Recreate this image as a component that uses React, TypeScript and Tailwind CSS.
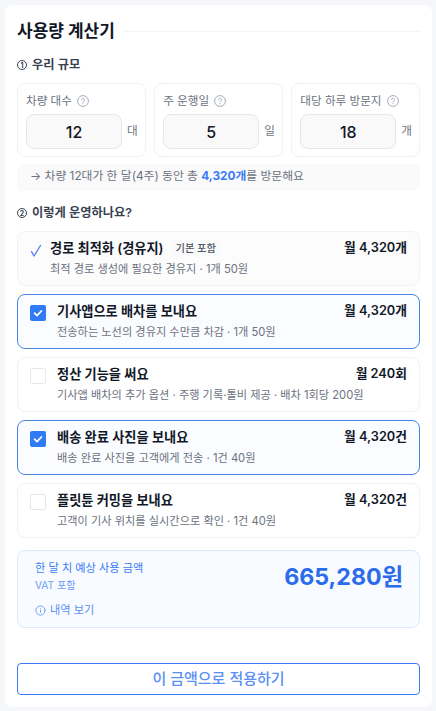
import React from "react";

const font = { fontFamily: 'Inter, "Noto Sans CJK KR", sans-serif' };

function Help() {
  return (
    <svg width="12" height="12" viewBox="0 0 12 12" fill="none" className="shrink-0 text-[#9ca3af]">
      <circle cx="6" cy="6" r="5.4" stroke="currentColor" strokeWidth="0.9" />
      <path d="M4.5 4.7a1.5 1.5 0 1 1 2.3 1.3c-.5.3-.8.6-.8 1.1" stroke="currentColor" strokeWidth="0.9" strokeLinecap="round" />
      <circle cx="6" cy="8.7" r="0.55" fill="currentColor" />
    </svg>
  );
}

function NumberCard({ label, value, unit }: { label: string; value: string; unit: string }) {
  return (
    <div className="h-[74px] rounded-[8px] border border-[#f1f2f4] bg-white pl-[8px] pt-[9px]">
      <div className="flex h-[16px] items-center gap-[5px] text-[11.6px] leading-[16px] text-[#6b7280]">
        <span>{label}</span>
        <Help />
      </div>
      <div className="mt-[5px] flex items-start gap-[5px]">
        <div className="flex h-[35px] w-[96px] items-center justify-center rounded-[8px] border border-[#e5e7eb] bg-[#f9f9f9] text-[16px] font-medium text-[#111827]">
          {value}
        </div>
        <span className="mt-[9px] text-[11.6px] leading-[16px] text-[#6b7280]">{unit}</span>
      </div>
    </div>
  );
}

function Box({ checked }: { checked: boolean }) {
  if (checked) {
    return (
      <div className="flex h-[16px] w-[16px] shrink-0 items-center justify-center rounded-[2px] bg-[#2f7bf6]">
        <svg width="12" height="12" viewBox="0 0 12 12" fill="none">
          <path d="M2.6 6.2 5 8.6l4.4-4.6" stroke="white" strokeWidth="1.8" strokeLinecap="round" strokeLinejoin="round" />
        </svg>
      </div>
    );
  }
  return <div className="h-[16px] w-[16px] shrink-0 rounded-[2px] border border-[#e5e7eb] bg-white" />;
}

function Row({
  checked,
  title,
  price,
  desc,
}: {
  checked: boolean;
  title: string;
  price: string;
  desc: string;
}) {
  return (
    <div
      className={
        checked
          ? "flex h-[55px] items-start rounded-[8px] border border-[#4a85e6] bg-[#fbfcff] pl-[12px] pr-[12px] pt-[7px]"
          : "flex h-[55px] items-start rounded-[8px] border border-[#f1f2f4] bg-white pl-[12px] pr-[12px] pt-[7px]"
      }
    >
      <div className="mt-[3px]">
        <Box checked={checked} />
      </div>
      <div className="ml-[11px] min-w-0 flex-1">
        <div className="flex items-center justify-between text-[#111827]">
          <span className="text-[13.2px] font-semibold leading-[18px]">{title}</span>
          <span className="text-[12.75px] font-semibold leading-[18px]">{price}</span>
        </div>
        <div className="mt-[5px] text-[11.2px] leading-[15px] text-[#6b7280]">{desc}</div>
      </div>
    </div>
  );
}

function Step({ n, text }: { n: string; text: string }) {
  return (
    <div className="flex h-[18px] items-center gap-[5px] text-[12.25px] font-semibold leading-[18px] text-[#374151]">
      <span className="flex h-[10px] w-[10px] shrink-0 items-center justify-center rounded-full border-[1.3px] border-[#374151] text-[7px] font-bold leading-none">
        {n}
      </span>
      <span>{text}</span>
    </div>
  );
}

export default function App() {
  return (
    <div style={font} className="h-[711px] w-[436px] overflow-hidden bg-[#f5f7fb] pl-[5px] pr-[4px] pt-[5px]">
      <div className="h-[702px] rounded-[8px] bg-white px-[12px] pt-[12px]">
        <div className="flex h-[27px] items-center gap-[9px] pt-[1px]">
          <h1 className="text-[17px] font-bold leading-[26px] text-[#111827]">사용량 계산기</h1>
          <div className="h-px flex-1 bg-[#f3f4f6]" />
        </div>

        <div className="mt-[12px]">
          <Step n="1" text="우리 규모" />
        </div>

        <div className="mt-[9px] grid grid-cols-3 gap-[8.5px]">
          <NumberCard label="차량 대수" value="12" unit="대" />
          <NumberCard label="주 운행일" value="5" unit="일" />
          <NumberCard label="대당 하루 방문지" value="18" unit="개" />
        </div>

        <div className="mt-[7px] flex h-[27px] items-center rounded-[6px] bg-[#fafafa] pb-[1px] pl-[13px] text-[11.8px] text-[#6b7280]">
          <p>
            → 차량 12대가 한 달(4주) 동안 총 <span className="font-bold text-[#3b7bf6]">4,320개</span>를 방문해요
          </p>
        </div>

        <div className="mt-[13px]">
          <Step n="2" text="이렇게 운영하나요?" />
        </div>

        <div className="mt-[9px] flex flex-col gap-[8px]">
          <div className="flex h-[55px] items-start rounded-[8px] border border-[#f1f2f4] bg-[#fcfcfd] pl-[12px] pr-[12px] pt-[7px]">
            <svg width="12" height="14" viewBox="0 0 12 14" fill="none" className="mt-[5px] shrink-0">
              <path d="M1.5 7.5 4 12 10.5 1.5" stroke="#4f7df3" strokeWidth="1.3" strokeLinecap="round" strokeLinejoin="round" />
            </svg>
            <div className="ml-[8px] min-w-0 flex-1">
              <div className="flex items-center justify-between text-[#111827]">
                <div className="flex items-center gap-[6px]">
                  <span className="text-[13.2px] font-semibold leading-[18px]">경로 최적화 (경유지)</span>
                  <span className="rounded-[4px] bg-[#fafafa] px-[6px] text-[10.2px] font-medium leading-[16px] text-[#4b5563]">기본 포함</span>
                </div>
                <span className="text-[12.75px] font-semibold leading-[18px]">월 4,320개</span>
              </div>
              <div className="mt-[5px] text-[11.2px] leading-[15px] text-[#6b7280]">최적 경로 생성에 필요한 경유지 · 1개 50원</div>
            </div>
          </div>
          <Row checked title="기사앱으로 배차를 보내요" price="월 4,320개" desc="전송하는 노선의 경유지 수만큼 차감 · 1개 50원" />
          <Row checked={false} title="정산 기능을 써요" price="월 240회" desc="기사앱 배차의 추가 옵션 · 주행 기록·톨비 제공 · 배차 1회당 200원" />
          <Row checked title="배송 완료 사진을 보내요" price="월 4,320건" desc="배송 완료 사진을 고객에게 전송 · 1건 40원" />
          <Row checked={false} title="플릿튠 커밍을 보내요" price="월 4,320건" desc="고객이 기사 위치를 실시간으로 확인 · 1건 40원" />
        </div>

        <div className="mt-[12px] flex h-[78px] items-start justify-between rounded-[8px] border border-[#dbeafe] bg-[#f8fbff] pl-[17px] pr-[16px] pt-[9px]">
          <div>
            <div className="text-[11.2px] font-normal leading-[16px] text-[#3b7bf6]">한 달 치 예상 사용 금액</div>
            <div className="mt-[1px] text-[10.2px] leading-[16px] text-[#6f9df5]">VAT 포함</div>
            <div className="mt-[9px] flex items-center gap-[4px] text-[11.2px] leading-[16px] text-[#5b8ff5]">
              <svg width="11" height="11" viewBox="0 0 24 24" fill="none" stroke="currentColor" strokeWidth="1.8" strokeLinecap="round">
                <circle cx="12" cy="12" r="10" />
                <path d="M12 16v-5M12 8h.01" />
              </svg>
              <span>내역 보기</span>
            </div>
          </div>
          <div className="mt-[1px] text-[23.2px] font-bold leading-[32px] text-[#2b6bec]">665,280원</div>
        </div>

        <button className="mt-[35px] flex h-[32px] w-full items-center justify-center rounded-[4px] border border-[#3b7bf6] bg-white text-[15px] font-medium text-[#5b8ff5]">
          이 금액으로 적용하기
        </button>
      </div>
    </div>
  );
}
